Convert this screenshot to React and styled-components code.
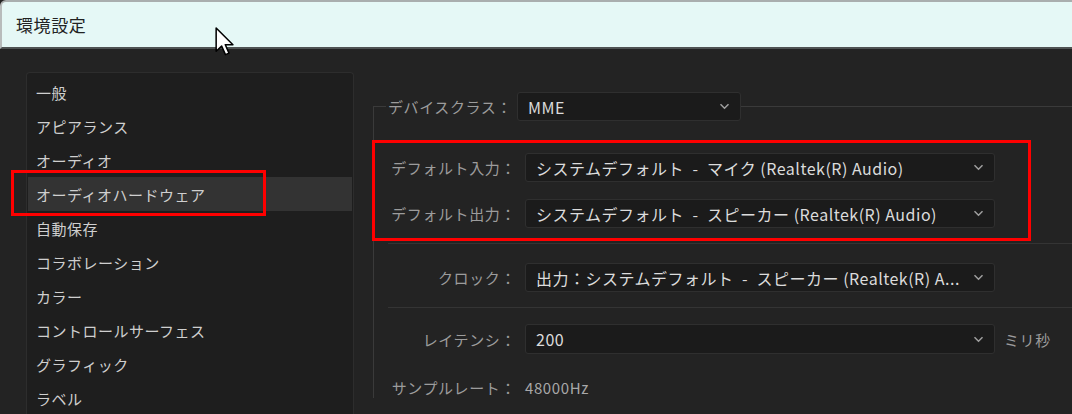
import React from "react";
import styled, { createGlobalStyle } from "styled-components";

const GlobalStyle = createGlobalStyle`
  html, body {
    margin: 0;
    padding: 0;
    background: #232323;
  }
  body {
    font-family: "Noto Sans CJK JP", "Noto Sans", sans-serif;
  }
`;

const Window = styled.div`
  position: relative;
  width: 1072px;
  height: 414px;
  overflow: hidden;
  display: flex;
  flex-direction: column;
  background: #232323;
`;

const TitleBar = styled.div`
  height: 45px;
  flex: none;
  display: flex;
  align-items: center;
  padding-left: 14px;
  background: #e5f8f6;
  border-top: 2px solid #a9aeae;
  border-bottom: 2px solid #4f5353;
  border-left: 2px solid #b8bcbc;
  border-top-left-radius: 6px;
  color: #222;
  font-size: 17px;
  letter-spacing: 0.6px;
`;

const Body = styled.div`
  flex: 1;
  display: flex;
  padding: 23px 0 0 26px;
  min-height: 0;
`;

const Sidebar = styled.ul`
  width: 324px;
  flex: none;
  margin: 0;
  padding: 2px 1px 0;
  list-style: none;
  background: #1e1e1e;
  border: 1px solid #2d2d2d;
  border-bottom: none;
  border-radius: 4px 4px 0 0;
  box-sizing: content-box;
`;

const SideItem = styled.li`
  height: 34px;
  display: flex;
  align-items: center;
  padding-left: 8px;
  font-size: 15px;
  letter-spacing: 0.5px;
  color: #cfcfcf;
  background: ${(p) => (p.$active ? "#333333" : "transparent")};
`;

const Main = styled.div`
  flex: 1;
  padding: 20px 0 0 19px;
  min-width: 0;
`;

const Group = styled.fieldset`
  margin: 0;
  padding: 32px 0 0 0;
  width: 900px;
  border: none;
  border-top: 1px solid #3a3a3a;
  border-left: 1px solid #3a3a3a;
  min-width: 0;
`;

const Legend = styled.legend`
  margin-left: 12px;
  padding: 0 0 0 2px;
  display: flex;
  align-items: center;
  gap: 5px;
`;

const Label = styled.span`
  font-size: 15px;
  letter-spacing: 0.6px;
  color: #9c9c9c;
  white-space: nowrap;
  text-align: right;
`;

const Select = styled.div`
  width: ${(p) => p.$w || 470}px;
  height: ${(p) => p.$h || 29}px;
  box-sizing: border-box;
  display: flex;
  align-items: center;
  gap: 6px;
  padding: 0 10px;
  background: #1b1b1b;
  border: 1px solid #2f2f2f;
  border-radius: 3px;
  color: #dcdcdc;
  font-size: 16px;
  letter-spacing: 0.5px;
`;

const SelectText = styled.span`
  flex: 1;
  white-space: nowrap;
  overflow: hidden;
`;

const Row = styled.div`
  display: grid;
  grid-template-columns: 128px 470px auto;
  column-gap: 9px;
  align-items: center;
  padding-left: 14px;
  margin-top: ${(p) => p.$mt || 0}px;
`;

const Divider = styled.div`
  height: 1px;
  margin: ${(p) => p.$m || "15px 0 19px"};
  margin-left: 14px;
  background: #343434;
`;

const Unit = styled.span`
  font-size: 15px;
  letter-spacing: 0.6px;
  color: #9c9c9c;
`;

const Value = styled.span`
  font-size: 15px;
  letter-spacing: 0.6px;
  color: #a8a8a8;
`;

const Highlight = styled.div`
  position: absolute;
  left: ${(p) => p.$x}px;
  top: ${(p) => p.$y}px;
  width: ${(p) => p.$w}px;
  height: ${(p) => p.$h}px;
  box-sizing: border-box;
  border: 3px solid #ff0000;
  pointer-events: none;
`;

const Cursor = styled.svg`
  position: absolute;
  left: 215px;
  top: 27px;
`;

const Chevron = () => (
  <svg width="11" height="7" viewBox="0 0 11 7">
    <path d="M1.5 1.2l4 4 4-4" fill="none" stroke="#a0a0a0" strokeWidth="1.5" />
  </svg>
);

const Dropdown = ({ children, w, h }) => (
  <Select $w={w} $h={h}>
    <SelectText>{children}</SelectText>
    <Chevron />
  </Select>
);

const menu = [
  "一般",
  "アピアランス",
  "オーディオ",
  "オーディオハードウェア",
  "自動保存",
  "コラボレーション",
  "カラー",
  "コントロールサーフェス",
  "グラフィック",
  "ラベル",
];

const DASH = "\u2002-\u2002";

export default function App() {
  return (
    <>
      <GlobalStyle />
      <Window>
        <TitleBar>環境設定</TitleBar>
        <Body>
          <Sidebar>
            {menu.map((m, i) => (
              <SideItem key={m} $active={i === 3}>
                {m}
              </SideItem>
            ))}
          </Sidebar>
          <Main>
            <Group>
              <Legend>
                <Label>デバイスクラス：</Label>
                <Dropdown w={224}>MME</Dropdown>
              </Legend>
              <Row>
                <Label>デフォルト入力：</Label>
                <Dropdown>{`システムデフォルト${DASH}マイク (Realtek(R) Audio)`}</Dropdown>
              </Row>
              <Row $mt={17}>
                <Label>デフォルト出力：</Label>
                <Dropdown>{`システムデフォルト${DASH}スピーカー (Realtek(R) Audio)`}</Dropdown>
              </Row>
              <Divider />
              <Row>
                <Label>クロック：</Label>
                <Dropdown>{`出力：システムデフォルト${DASH}スピーカー (Realtek(R) A...`}</Dropdown>
              </Row>
              <Divider $m="15px 0 16px" />
              <Row>
                <Label>レイテンシ：</Label>
                <Dropdown h={30}>200</Dropdown>
                <Unit>ミリ秒</Unit>
              </Row>
              <Row $mt={23}>
                <Label>サンプルレート：</Label>
                <Value>48000Hz</Value>
              </Row>
            </Group>
          </Main>
        </Body>
        <Highlight $x={11} $y={170} $w={255} $h={46} />
        <Highlight $x={372} $y={140} $w={659} $h={101} />
        <Cursor width="20" height="29" viewBox="0 0 13 19">
          <path
            d="M0.7 0.7v15.2l3.6-3.4 2.5 5.6 2.3-1-2.4-5.5h5z"
            fill="#fff"
            stroke="#000"
            strokeWidth="1"
            strokeLinejoin="round"
          />
        </Cursor>
      </Window>
    </>
  );
}
